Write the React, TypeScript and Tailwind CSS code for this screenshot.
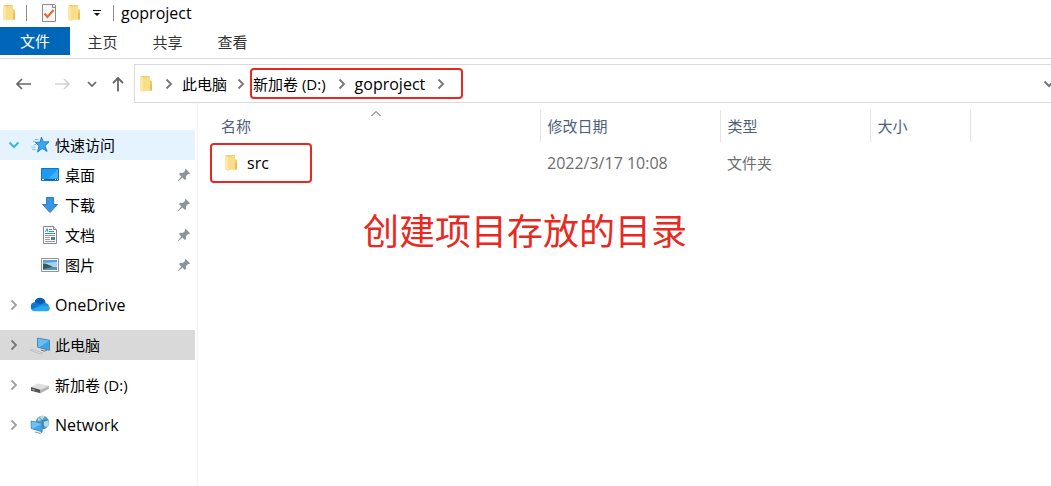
import React from "react";

const FolderIcon = ({ className = "" }: { className?: string }) => (
	<svg className={`shrink-0 ${className}`} width="14" height="18" viewBox="0 0 14 18" aria-hidden="true">
		<path d="M2 1h9v4l2 1v9.500H2z" fill="#f2cd6c" />
		<path d="M10.500 9H13v6.500h-2.500z" fill="#e9bd55" />
		<path d="M1 1.200 4.600 3v14.500L1 15.500z" fill="#fbe7a6" />
		<path d="M4.600 3 11 1.500V15l-6.400 1z" fill="#f9dd88" />
	</svg>
);

const ChevronRight = ({ className = "" }: { className?: string }) => (
	<svg className={`shrink-0 ${className}`} width="8" height="12" viewBox="0 0 8 12" fill="none" stroke="currentColor" strokeWidth="1.800" aria-hidden="true">
		<path d="M1.500 1.500 6 6l-4.500 4.500" />
	</svg>
);

const ChevronDown = ({ className = "" }: { className?: string }) => (
	<svg className={`shrink-0 ${className}`} width="12" height="8" viewBox="0 0 12 8" fill="none" stroke="currentColor" strokeWidth="2" aria-hidden="true">
		<path d="m1.500 1.500 4.500 4.500 4.500-4.500" />
	</svg>
);

const PinIcon = () => (
	<svg className="shrink-0" width="14" height="14" viewBox="0 0 14 14" fill="#8c949b" aria-hidden="true">
		<path d="M8.600.8 13.200 5.400l-1.300.6-.8-.1-2.200 2.300.3 2.500-1.300 1.200-2.400-2.500L1.400 13 .6 13.400 1 12.500l3.300-4.100L1.900 6l1.300-1.200 2.500.3L8 2.900l-.1-.9z" />
	</svg>
);

const StarIcon = () => (
	<svg width="20" height="20" viewBox="0 0 20 20" aria-hidden="true">
		<path d="m10.400 2.200 2.100 4.700 5.600-.1-4.100 4 2.100 5.600-4.800-3-4.800 3.600 1.500-5.900-3.600-3.700 4.800-.3z" fill="#3ba7ec" stroke="#1a78c4" strokeWidth=".9" />
		<path d="M3.500 4.500h4M2 6.500h3M.5 12h4M1 14.500h3.500M3 9.500h2" stroke="#7fc1ee" />
	</svg>
);

const DesktopIcon = () => (
	<svg width="20" height="20" viewBox="0 0 20 20" aria-hidden="true">
		<path d="M1.500 3.500h17v12h-17z" fill="#1a9bf5" stroke="#1673bd" />
		<path d="M18 4v9L8 14z" fill="#43b2fa" />
		<path d="M2 14.500h16" stroke="#0c62a8" />
		<path d="M2 14.500h2M15 14.500h1M17 14.500h1" stroke="#fff" />
	</svg>
);

const DownloadIcon = () => (
	<svg width="20" height="20" viewBox="0 0 20 20" aria-hidden="true">
		<path d="M6.500 2.500h7v7h4L10 17.500 2.500 9.500h4z" fill="#3994e4" stroke="#2b7dca" />
	</svg>
);

const DocumentIcon = () => (
	<svg width="20" height="20" viewBox="0 0 20 20" aria-hidden="true">
		<path d="M3.500 1.500h10l3 3v14h-13z" fill="#fff" stroke="#86898c" />
		<path d="M13.500 1.500v3h3" fill="#e5e5e5" stroke="#86898c" />
		<path d="m5.500 7 1.500-3.500L8 7M9 4.500h3M9 6.500h5M5 8.500h10" fill="none" stroke="#2c93d4" />
		<path d="M5 10.500h10M5 12.500h5M5 14.500h5M5 16.500h10" stroke="#8c9bab" />
		<path d="M11 12h4v3h-4z" fill="#4c7d9c" />
	</svg>
);

const PictureIcon = () => (
	<svg width="20" height="20" viewBox="0 0 20 20" aria-hidden="true">
		<path d="M1.500 3.500h17v13h-17z" fill="#fff" stroke="#8e9499" />
		<path d="M3 5h14v10H3z" fill="#a8d3f4" />
		<path d="M3 5h14v2L3 8z" fill="#5a9fe0" />
		<path d="M3 8.500c4 0 7 2 10 3.500H3z" fill="#335d55" />
		<path d="M3 12h14v3H3z" fill="#5c91ad" />
		<path d="M3 12h9l-9 2z" fill="#2d5360" />
	</svg>
);

const OneDriveIcon = () => (
	<svg width="20" height="20" viewBox="0 0 20 20" aria-hidden="true">
		<path d="M4.500 7.500A5.600 5.600 0 0 1 15.600 8L10 13z" fill="#0a5cb5" />
		<path d="M4.500 16A4.400 4.400 0 0 1 4.500 7.300c1.500-.1 2.800.3 4.100 1.100L13 11l-6 5z" fill="#0f78d4" />
		<path d="M8.500 10.500 11.800 9c1.200-1 2.500-1.200 3.800-1 2 .4 3 1.500 3.300 3L17 14z" fill="#1590df" />
		<path d="M1.500 14.500 9.500 11l8.700-.2C21 12.500 20 16 17 16.200H4.500c-1.200 0-2.300-.6-3-1.700z" fill="#28a8ea" />
	</svg>
);

const ComputerIcon = () => (
	<svg width="20" height="20" viewBox="0 0 20 20" aria-hidden="true">
		<path d="m7.500 3 12 2.300v10L7.500 12.200z" fill="#37a6f0" stroke="#607c91" strokeWidth=".9" />
		<path d="m8 3.500 11 2.200-9.500 6.600L8 12z" fill="#64bff7" />
		<path d="m11 15 3.500 1.200L17 15" fill="none" stroke="#6c7880" />
		<path d="m1 14 11.500 4-1.500 1L0 15z" fill="#f1f1f1" stroke="#a0a0a0" strokeWidth=".6" />
	</svg>
);

const DriveIcon = () => (
	<svg width="20" height="20" viewBox="0 0 20 20" aria-hidden="true">
		<path d="m1 12 7-3.500 11 2.200-8.500 4z" fill="#dedede" />
		<path d="m1 12 9.500 2.700v3.500L1 15.700z" fill="#555" />
		<path d="m10.500 14.700 8.500-4v3l-8.500 4.500z" fill="#b5b5b5" />
		<path d="m2.500 14.500 2 .6" stroke="#9de39b" />
	</svg>
);

const NetworkIcon = () => (
	<svg width="20" height="20" viewBox="0 0 20 20" aria-hidden="true">
		<circle cx="12.500" cy="7.500" r="6.700" fill="#5b9dc0" />
		<path d="M8 3c2-2 5-2.500 7-1.500L12 5 8 6zM14 7l4-2c1.500 2.500 1 5-.5 7L14 11z" fill="#b4d9e6" />
		<path d="M9 2.500 13 6l5-1M12 6l2 8" fill="none" stroke="#3578a3" strokeWidth=".8" />
		<path d="m1.200 6 11 2.300v8.500L1.200 13.500z" fill="#38a8f3" stroke="#4a7591" strokeWidth=".8" />
		<path d="m1.700 6.500 10 2.200-9 5-1-.4z" fill="#6ac4fa" />
		<path d="m5 17 5 1.300 2-1" fill="none" stroke="#8b969e" />
	</svg>
);

const QUICK_ACCESS = [
	{ name: "桌面", icon: <DesktopIcon /> },
	{ name: "下载", icon: <DownloadIcon /> },
	{ name: "文档", icon: <DocumentIcon /> },
	{ name: "图片", icon: <PictureIcon /> },
];

const LOCATIONS = [
	{ name: "OneDrive", icon: <OneDriveIcon />, size: "text-base", selected: false },
	{ name: "此电脑", icon: <ComputerIcon />, size: "text-[15px]", selected: true },
	{ name: "新加卷 (D:)", icon: <DriveIcon />, size: "text-[15px]", selected: false },
	{ name: "Network", icon: <NetworkIcon />, size: "text-base", selected: false },
];

const TitleBar = () => (
	<header className="flex h-[26px] items-center pl-[2px]">
		<FolderIcon />
		<span className="ml-[10px] h-4 w-px bg-[#8c8c8c]" />
		<button className="ml-[14px]" aria-label="属性">
			<svg width="16" height="20" viewBox="0 0 16 20" aria-hidden="true">
				<path d="M1.500 1.500h12l1 1v16h-13z" fill="#f8f8f8" stroke="#8b8b8b" />
				<path d="M11.500 1.500v3h3" fill="#ddd" stroke="#8b8b8b" />
				<path d="m3.500 10.500 3 3.500 6-7" fill="none" stroke="#e8632a" strokeWidth="2" />
			</svg>
		</button>
		<button className="ml-[10px]" aria-label="新建文件夹">
			<FolderIcon />
		</button>
		<button className="ml-[12px]" aria-label="自定义快速访问工具栏">
			<svg width="8" height="8" viewBox="0 0 8 8" aria-hidden="true">
				<path d="M0 1h8v1H0zM1 4h6L4 7z" fill="#111" />
			</svg>
		</button>
		<span className="ml-[12px] h-4 w-px bg-[#8c8c8c]" />
		<h1 className="ml-[7px] text-base leading-5">goproject</h1>
	</header>
);

const Ribbon = () => (
	<nav className="mt-px flex h-8 border-b border-[#dadbdc] text-[#333]">
		<button className="h-7 w-[70px] bg-[#0067b8] text-white">文件</button>
		{["主页", "共享", "查看"].map((tab) => (
			<button key={tab} className="h-[30px] w-[65px]">
				{tab}
			</button>
		))}
	</nav>
);

const AddressBar = () => (
	<div className="mt-[5px] flex h-[39px]">
		<div className="flex w-[134px] shrink-0 items-center pl-4 text-[#666]">
			<button aria-label="后退">
				<svg width="16" height="14" viewBox="0 0 16 14" fill="none" stroke="currentColor" strokeWidth="1.700" aria-hidden="true">
					<path d="M15 7H1M6 2 1 7l5 5" />
				</svg>
			</button>
			<button className="ml-[22px] text-[#d4d4d4]" aria-label="前进">
				<svg width="16" height="14" viewBox="0 0 16 14" fill="none" stroke="currentColor" strokeWidth="1.700" aria-hidden="true">
					<path d="M1 7h14M10 2l5 5-5 5" />
				</svg>
			</button>
			<button className="ml-[17px]" aria-label="最近的位置">
				<svg width="10" height="8" viewBox="0 0 10 8" fill="none" stroke="currentColor" strokeWidth="1.700" aria-hidden="true">
					<path d="m1 2 4 4 4-4" />
				</svg>
			</button>
			<button className="ml-[14px]" aria-label="上移">
				<svg width="14" height="16" viewBox="0 0 14 16" fill="none" stroke="currentColor" strokeWidth="1.800" aria-hidden="true">
					<path d="M7 15.500V2M2 7l5-5 5 5" />
				</svg>
			</button>
		</div>
		<div className="flex min-w-0 flex-1 items-center overflow-hidden border-y border-l border-[#d9d9d9] pl-1">
			<FolderIcon />
			<ChevronRight className="ml-3 text-[#777]" />
			<button className="ml-[9px]">此电脑</button>
			<ChevronRight className="ml-[10px] text-[#777]" />
			<div className="ml-[5px] flex h-[31px] w-[213px] shrink-0 items-center rounded border-2 border-[#e8291f] pl-px">
				<button>新加卷 (D:)</button>
				<ChevronRight className="ml-3 text-[#777]" />
				<button className="ml-[9px] text-base leading-5">goproject</button>
				<ChevronRight className="ml-3 text-[#777]" />
			</div>
			<button className="-mr-1 ml-auto text-[#777]" aria-label="以前的位置">
				<ChevronDown />
			</button>
		</div>
	</div>
);

const Sidebar = () => (
	<aside className="w-[198px] shrink-0 border-r border-[#f3f3f3] pr-[2px] pt-[27px]">
		<button className="flex h-[30px] w-full items-center bg-[#e5f3ff] pl-2">
			<ChevronDown className="text-[#33b5e6]" />
			<span className="ml-[11px]"><StarIcon /></span>
			<span className="ml-1">快速访问</span>
		</button>
		<ul>
			{QUICK_ACCESS.map((item) => (
				<li key={item.name}>
					<button className="flex h-[30px] w-full items-center pl-10 pr-1">
						{item.icon}
						<span className="ml-[5px] mr-auto">{item.name}</span>
						<PinIcon />
					</button>
				</li>
			))}
		</ul>
		<ul className="mt-[10px] flex flex-col gap-[10px]">
			{LOCATIONS.map((item) => (
				<li key={item.name}>
					<button className={`flex h-[30px] w-full items-center pl-[10px] ${item.selected ? "bg-[#d9d9d9]" : ""}`}>
						<ChevronRight className={item.selected ? "text-[#777]" : "text-[#a0a0a0]"} />
						<span className="ml-3">{item.icon}</span>
						<span className={`ml-[5px] leading-5 ${item.size}`}>{item.name}</span>
					</button>
				</li>
			))}
		</ul>
	</aside>
);

const FileList = () => (
	<main className="min-w-0 flex-1 pl-3 pt-[7px]">
		<table className="w-[760px] table-fixed text-left">
			<thead>
				<tr className="h-8 text-[#4c607a]">
					<th className="relative w-[330px] border-r border-[#e5e5e5] pl-[11px] font-normal">
						名称
						<svg className="absolute left-1/2 top-0 -translate-x-1" width="10" height="7" viewBox="0 0 10 7" fill="none" stroke="#555" aria-hidden="true">
							<path d="m.5 6 4.500-4.500L9.500 6" />
						</svg>
					</th>
					<th className="w-[180px] border-r border-[#e5e5e5] pl-[7px] font-normal">修改日期</th>
					<th className="w-[150px] border-r border-[#e5e5e5] pl-[7px] font-normal">类型</th>
					<th className="w-[100px] border-r border-[#e5e5e5] pl-[7px] font-normal">大小</th>
				</tr>
			</thead>
			<tbody>
				<tr className="h-[42px] text-[#6d6d6d]">
					<td>
						<button className="flex h-10 w-[102px] items-center rounded border-2 border-[#e8291f] pl-3 text-base leading-5 text-black">
							<FolderIcon />
							<span className="ml-[9px]">src</span>
						</button>
					</td>
					<td className="pl-[7px] text-base leading-5">2022/3/17 10:08</td>
					<td className="pl-[7px]">文件夹</td>
					<td />
				</tr>
			</tbody>
		</table>
		<p className="mt-7 pl-[153px] text-4xl text-[#e8291f]">创建项目存放的目录</p>
	</main>
);

const App = () => (
	<div className="flex min-h-screen flex-col overflow-hidden whitespace-nowrap bg-white font-['Open_Sans','Noto_Sans_CJK_SC',sans-serif] text-[15px] leading-5 text-black">
		<TitleBar />
		<Ribbon />
		<AddressBar />
		<div className="flex flex-1">
			<Sidebar />
			<FileList />
		</div>
	</div>
);

export default App;
